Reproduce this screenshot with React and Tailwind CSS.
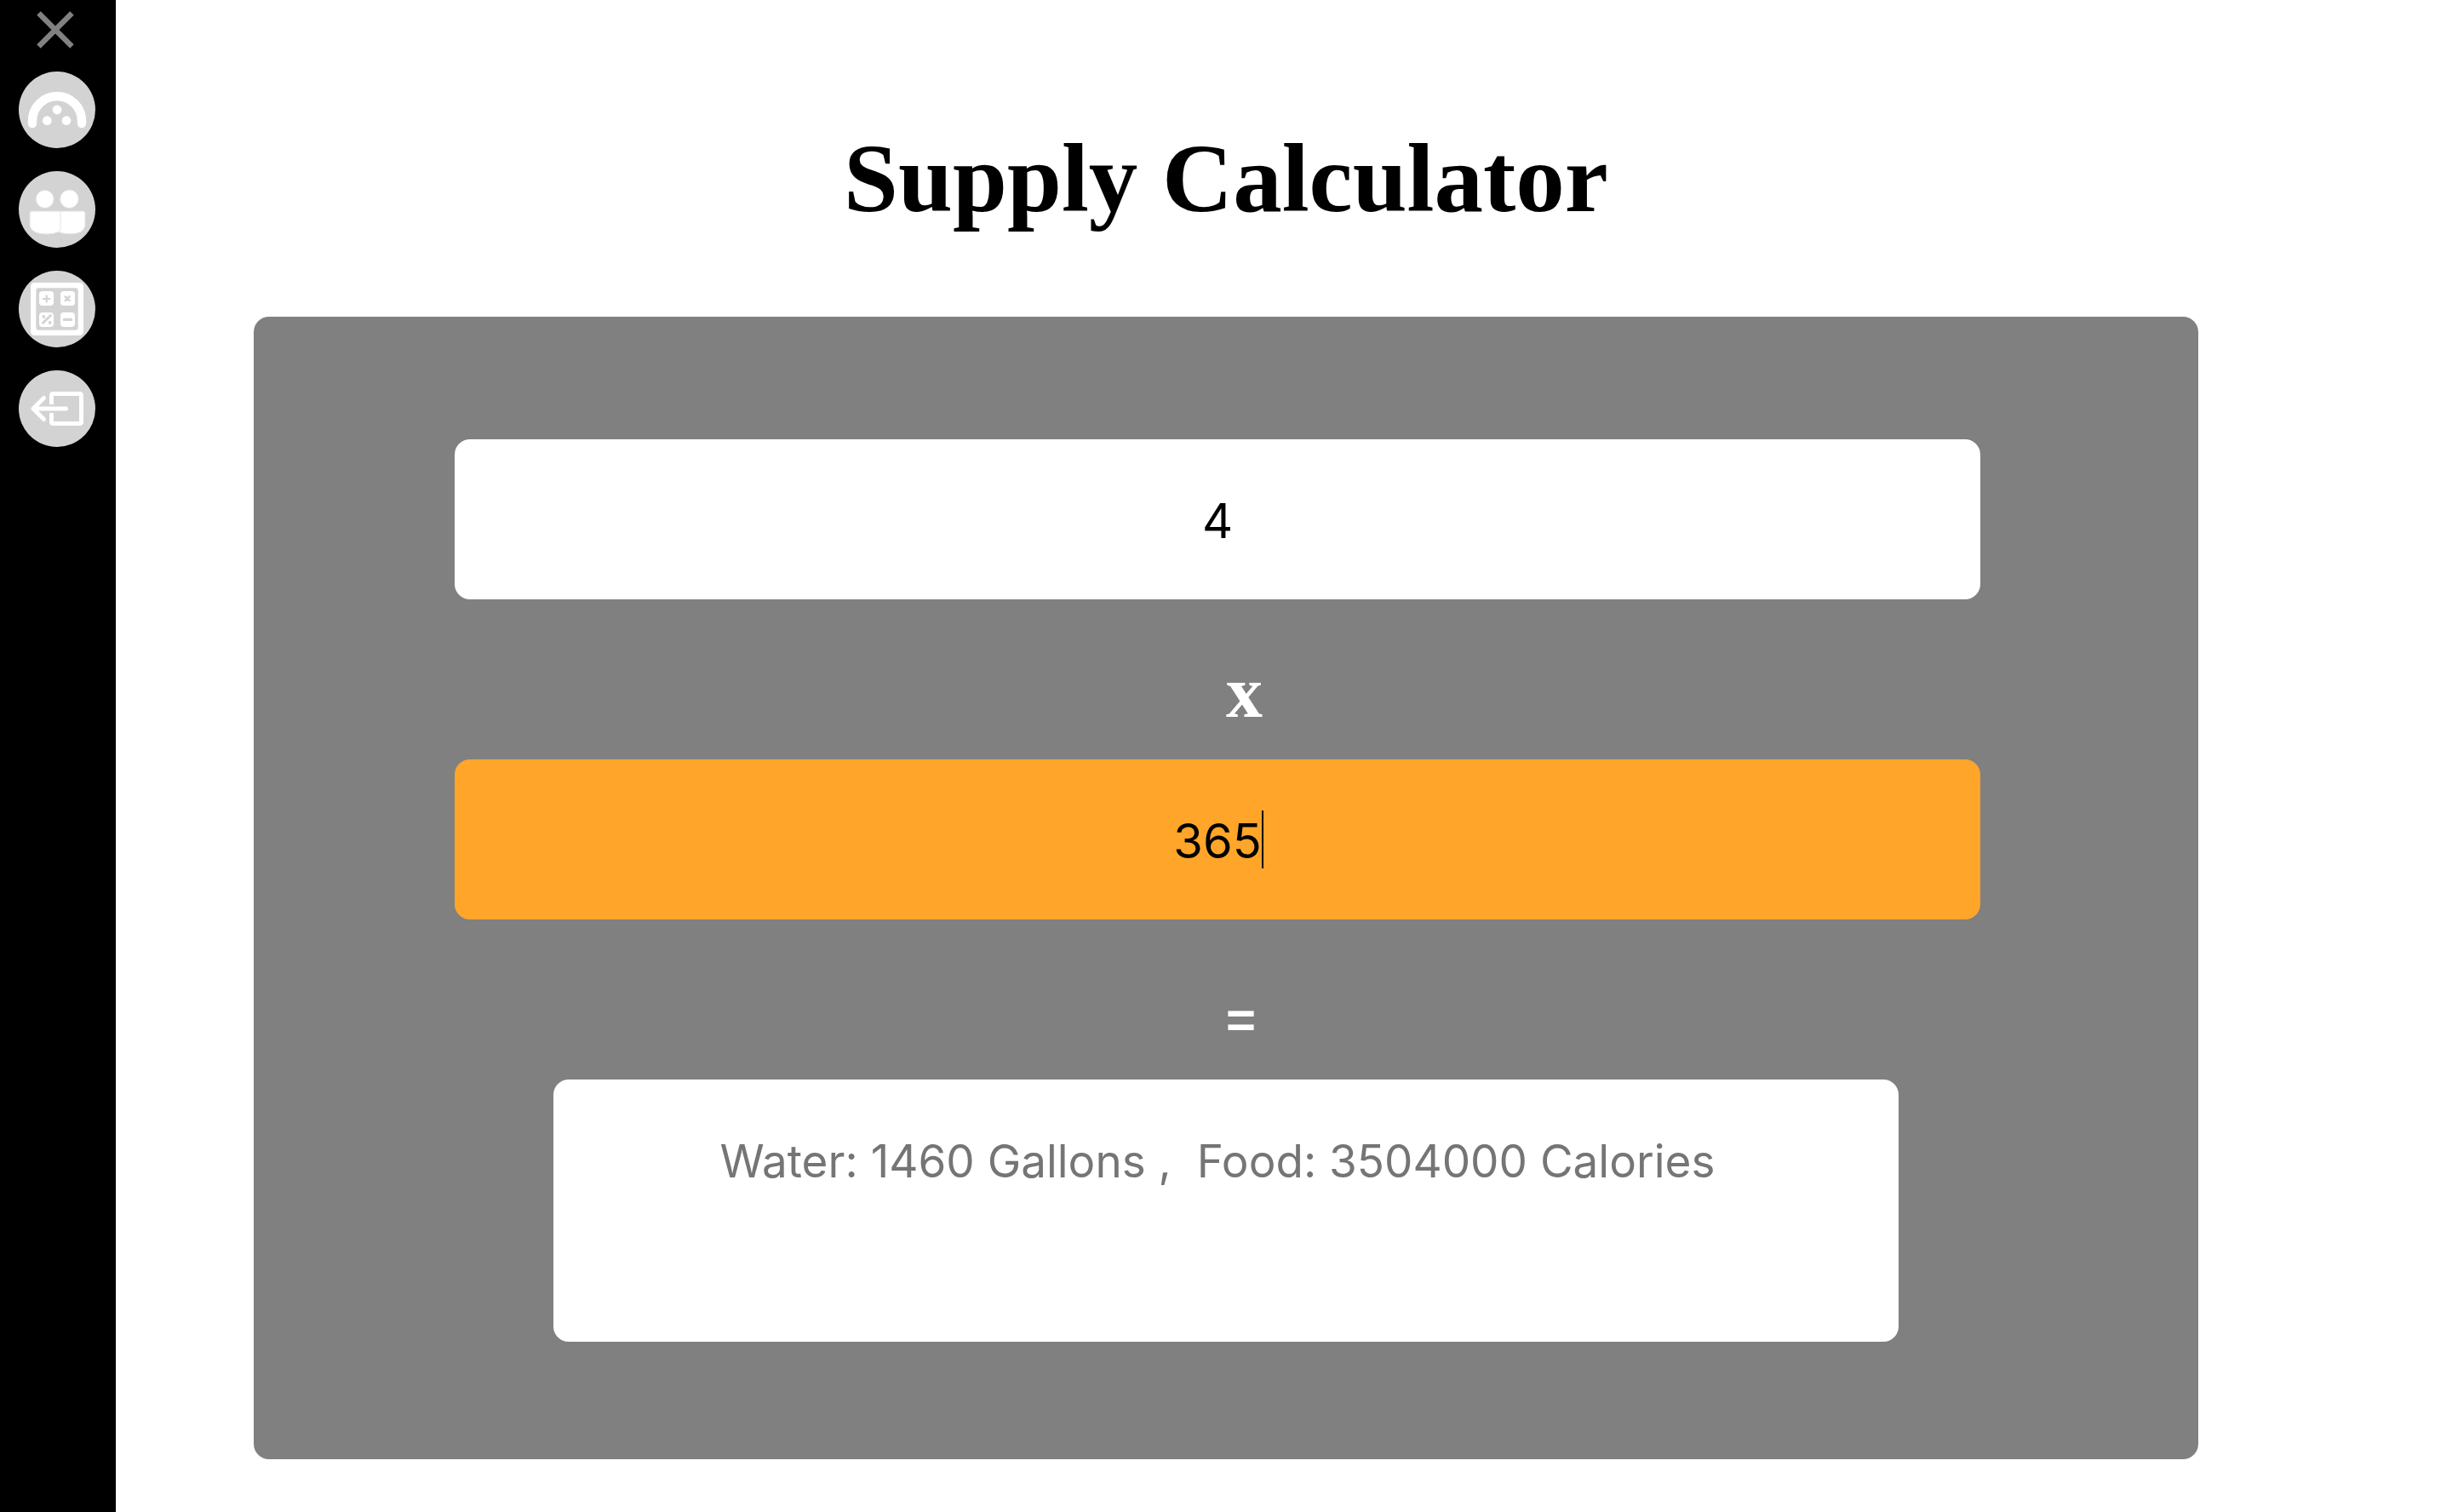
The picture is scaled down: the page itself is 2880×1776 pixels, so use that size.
import { useState } from "react";

function CircleIcon({ children }) {
  return (
    <svg viewBox="0 0 90 90" className="size-[90px]" fill="none" aria-hidden="true">
      <circle cx="45" cy="45" r="45" fill="#d3d3d3" />
      {children}
    </svg>
  );
}

function DashboardIcon() {
  return (
    <CircleIcon>
      <path d="M16 61v-3a29 29 0 0 1 58 0v3" stroke="#fff" strokeWidth="10.4" strokeLinecap="round" />
      <g fill="#fff">
        <circle cx="45" cy="45" r="5.4" />
        <circle cx="33.3" cy="57.7" r="5.4" />
        <circle cx="56" cy="57.7" r="5.4" />
      </g>
    </CircleIcon>
  );
}

function PeopleIcon() {
  return (
    <CircleIcon>
      <g fill="#fff" stroke="#e2e2e2" strokeWidth="1">
        <circle cx="59.4" cy="32.7" r="10.8" />
        <path d="M47 47h28.500q2.500 0 2.500 2.500v15q-2.500 9.300-16 9.300q-11 0-15-2.300z" />
        <circle cx="30.700" cy="32.900" r="10.500" />
        <path d="M15 47h32q2 0 2 2.500v17q0 5-2.500 5q-5 2.500-14 2.500q-17 0-19.500-9.500v-15q0-2.500 2-2.500z" />
      </g>
    </CircleIcon>
  );
}

function CalculatorIcon() {
  return (
    <CircleIcon>
      <rect x="14" y="14" width="62" height="62" rx="4.500" fill="#fff" />
      <rect x="20.300" y="20.300" width="49.400" height="49.400" rx="3" fill="#d3d3d3" />
      <g fill="#fff">
        <rect x="24" y="24" width="17" height="17" rx="4" />
        <rect x="49" y="24" width="17" height="17" rx="4" />
        <rect x="24" y="49" width="17" height="17" rx="4" />
        <rect x="49" y="49" width="17" height="17" rx="4" />
      </g>
      <g stroke="#d3d3d3" strokeLinecap="round">
        <path d="M32.700 29.300v7.400M29 33h7.400" strokeWidth="2.200" />
        <path d="M54.700 30.400l4.800 4.800M59.500 30.400l-4.800 4.800" strokeWidth="2.600" />
        <path d="M28.500 61.300l8.800-8.600" strokeWidth="3" />
        <path d="M53.300 57.400h8.200" strokeWidth="3.200" />
      </g>
      <circle cx="29.300" cy="54" r="1.900" fill="#d3d3d3" />
      <circle cx="36.700" cy="61" r="1.900" fill="#d3d3d3" />
    </CircleIcon>
  );
}

function LogoutIcon() {
  return (
    <CircleIcon>
      <g stroke="#fff" strokeWidth="5" strokeLinejoin="round">
        <path d="M38.500 40V29.500q0-2 2-2h31q2 0 2 2v31q0 2-2 2h-31q-2 0-2-2V50" />
        <path d="M17 45h38.500M29.500 32.500L17 45l12.500 12.500" strokeLinecap="round" />
      </g>
    </CircleIcon>
  );
}

const links = [
  { label: "Dashboard", href: "#dashboard", Icon: DashboardIcon },
  { label: "People", href: "#people", Icon: PeopleIcon },
  { label: "Calculator", href: "#calculator", Icon: CalculatorIcon },
  { label: "Log out", href: "#logout", Icon: LogoutIcon },
];

function Sidebar() {
  return (
    <aside className="w-[136px] shrink-0 bg-black pt-3">
      <button type="button" aria-label="Close menu" className="ml-[42px] block size-[46px]">
        <svg viewBox="0 0 46 46" className="size-full" fill="none" aria-hidden="true">
          <path d="M3.500 3.500l39 39M42.500 3.500l-39 39" stroke="#818181" strokeWidth="6.400" />
        </svg>
      </button>
      <nav className="mt-[26px] ml-[22px] flex flex-col items-start gap-[27px]">
        {links.map(({ label, href, Icon }) => (
          <a key={label} href={href} aria-label={label} className="block">
            <Icon />
          </a>
        ))}
      </nav>
    </aside>
  );
}

function Operator({ children }) {
  return (
    <div className="flex h-[188px] items-start pt-[78px] pl-[50%] font-bold text-white">
      {children}
    </div>
  );
}

const field =
  "block h-[188px] w-full rounded-[18px] pt-1 text-center font-['Inter',sans-serif] text-[56px] leading-[68px] text-black outline-none";

export default function App() {
  const [people, setPeople] = useState("4");
  const [days, setDays] = useState("365");
  const water = Number(people) * Number(days);
  const result = `Water: ${water} Gallons ,\u00a0 Food: ${water * 2400} Calories`;

  return (
    <div className="flex min-h-screen bg-white">
      <Sidebar />
      <main className="min-w-0 flex-1 pt-[152px] pr-[298px] pb-[62px] pl-[162px]">
        <h1 className="text-center font-['Liberation_Serif',serif] text-[115px] leading-[115px] font-bold text-black">
          Supply Calculator
        </h1>
        <form className="mt-[105px] rounded-[18px] bg-[#808080] px-[236px] pt-36 pb-[138px]">
          <div className="mr-5">
            <input
              aria-label="Number of people"
              className={`${field} bg-white`}
              value={people}
              onChange={(e) => setPeople(e.target.value)}
            />
          </div>
          <Operator>
            <span className="font-['Liberation_Serif',serif] text-[86px] leading-[62px]">x</span>
          </Operator>
          <div className="relative mr-5">
            <input
              aria-label="Number of days"
              className={`${field} bg-[#ffa52a] caret-transparent`}
              value={days}
              onChange={(e) => setDays(e.target.value)}
            />
            {/* text cursor after the last digit */}
            <span className="pointer-events-none absolute inset-0 flex items-center justify-center font-['Inter',sans-serif] text-[56px] leading-[68px]">
              <span className="relative" aria-hidden="true">
                <span className="invisible">{days}</span>
                <span className="absolute top-0 left-full h-[68px] w-0.5 bg-black" />
              </span>
            </span>
          </div>
          <Operator>
            <span className="font-['Liberation_Sans',sans-serif] text-[60px] leading-[80px]">=</span>
          </Operator>
          <textarea
            aria-label="Supplies needed"
            readOnly
            placeholder={result}
            className="mx-[116px] block h-[308px] w-[calc(100%-232px)] resize-none rounded-[18px] bg-white pt-[62px] pr-5 text-center font-['Inter',sans-serif] text-[53px] leading-[68px] outline-none placeholder:text-[#757575]"
          />
        </form>
      </main>
    </div>
  );
}
